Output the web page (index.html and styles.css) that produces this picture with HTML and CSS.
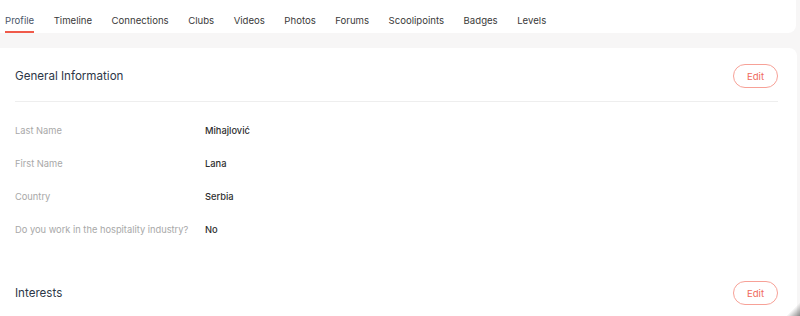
FILE: index.html
```html
<!DOCTYPE html>
<html lang="en">
<head>
  <meta charset="UTF-8">
  <title>Profile</title>
  <link rel="stylesheet" href="styles.css">
</head>
<body>
  <nav class="tabs">
    <a class="tab active">Profile</a>
    <a class="tab">Timeline</a>
    <a class="tab">Connections</a>
    <a class="tab">Clubs</a>
    <a class="tab">Videos</a>
    <a class="tab">Photos</a>
    <a class="tab">Forums</a>
    <a class="tab">Scoolipoints</a>
    <a class="tab">Badges</a>
    <a class="tab">Levels</a>
  </nav>

  <div class="card">
    <section class="section">
      <div class="section-head">
        <h2>General Information</h2>
        <button class="edit">Edit</button>
      </div>
      <div class="rows">
        <div class="row"><span class="label">Last Name</span><span class="value">Mihajlović</span></div>
        <div class="row"><span class="label">First Name</span><span class="value">Lana</span></div>
        <div class="row"><span class="label">Country</span><span class="value">Serbia</span></div>
        <div class="row"><span class="label">Do you work in the hospitality industry?</span><span class="value">No</span></div>
      </div>
    </section>

    <section class="section">
      <div class="section-head">
        <h2>Interests</h2>
        <button class="edit">Edit</button>
      </div>
    </section>
  </div>

  <div class="corner"></div>
</body>
</html>
```

FILE: styles.css
```css
body {
  margin: 0;
  background: #f7f6f6;
  font-family: Inter, "Noto Sans", sans-serif;
  color: #333;
  overflow: hidden;
  height: 316px;
}
.tabs {
  display: flex;
  gap: 19.5px;
  width: 796px;
  height: 33px;
  padding-left: 5px;
  box-sizing: border-box;
  background: #fff;
  border-radius: 0 0 8px 0;
}
.tab {
  display: flex;
  align-items: center;
  padding-top: 9px;
  font-size: 9.6px;
  color: #3a3a3a;
  border-bottom: 2px solid transparent;
  box-sizing: border-box;
}
.tab.active {
  color: #4a5568;
  border-bottom-color: #f05a4a;
}
.card {
  margin-top: 15px;
  width: 797px;
  height: 268px;
  padding: 16px 19px 0 15px;
  box-sizing: border-box;
  background: #fff;
  border-radius: 0 8px 0 0;
}
.section + .section {
  margin-top: 35px;
}
.section-head {
  display: flex;
  align-items: center;
  justify-content: space-between;
  height: 24px;
}
.section h2 {
  margin: 0;
  font-size: 11.6px;
  font-weight: 400;
  color: #2d3748;
}
.edit {
  width: 45px;
  height: 24px;
  border: 1px solid #f7a197;
  border-radius: 12px;
  background: #fff;
  color: #f06b5b;
  font-family: inherit;
  font-size: 9.6px;
  cursor: pointer;
}
.rows {
  margin-top: 13px;
  padding-top: 12px;
  border-top: 1px solid #eeeeee;
}
.row {
  display: flex;
  align-items: center;
  height: 33px;
}
.label {
  width: 190px;
  font-size: 9.3px;
  color: #a8a8a8;
}
.value {
  font-size: 9.3px;
  font-weight: 500;
  color: #2f2f2f;
}
.corner {
  position: absolute;
  right: 0;
  bottom: 0;
  width: 14px;
  height: 14px;
  background: linear-gradient(135deg, transparent 50%, #8a8a8a 100%);
}
```
